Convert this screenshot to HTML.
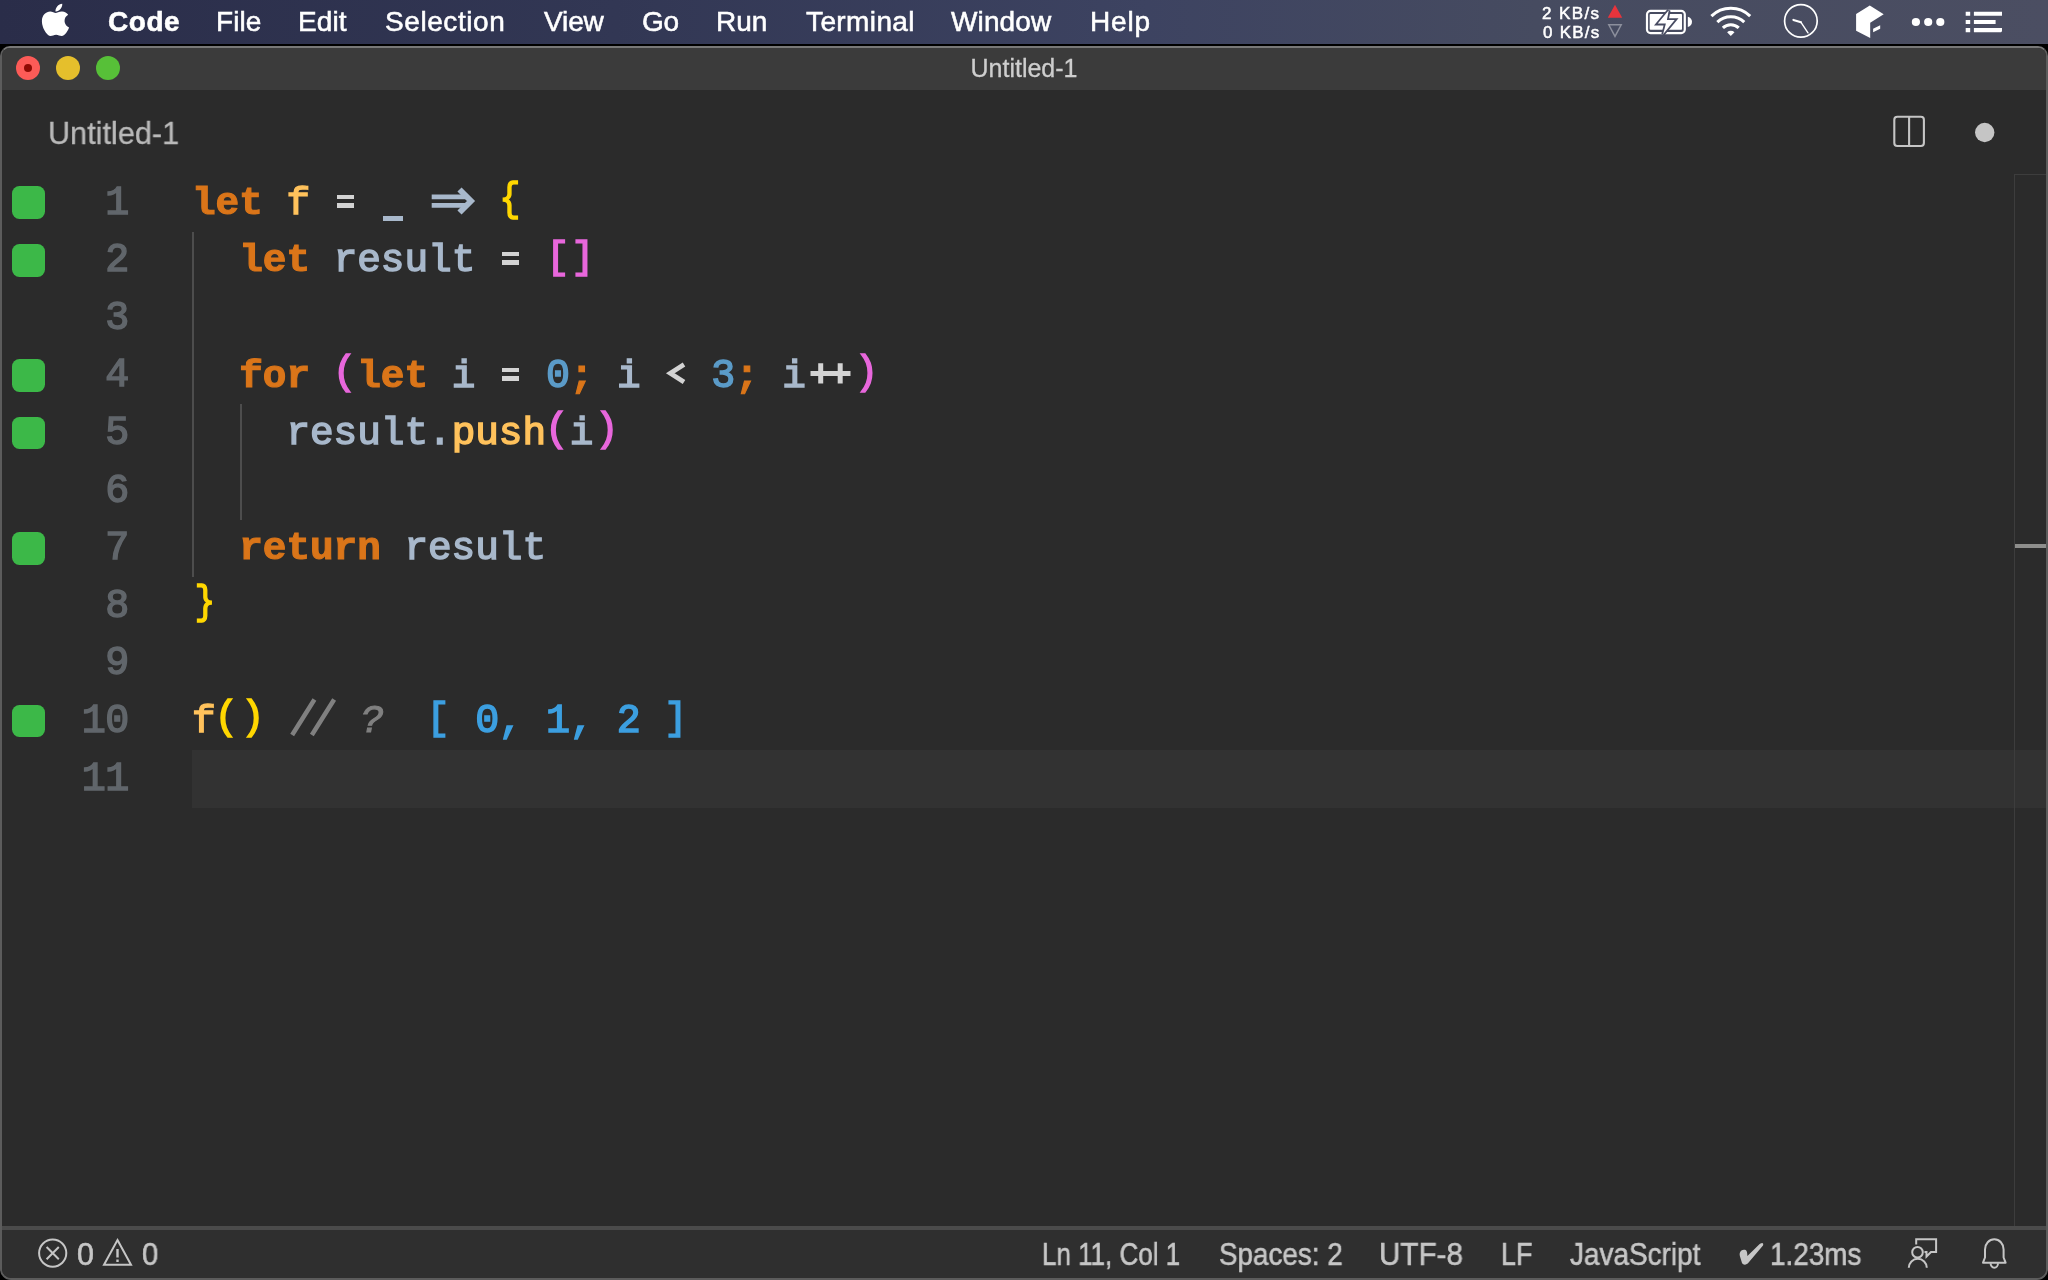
<!DOCTYPE html>
<html>
<head>
<meta charset="utf-8">
<title>Untitled-1</title>
<style>
*{margin:0;padding:0;box-sizing:border-box}
html,body{width:2048px;height:1280px;overflow:hidden;background:#000}
body{position:relative;font-family:"Liberation Sans",sans-serif;color:#fff}
.abs{position:absolute}
/* ---------- macOS menu bar ---------- */
#menubar{position:absolute;left:0;top:0;width:2048px;height:44px;
  background:linear-gradient(90deg,#2a2d49 0%,#323754 30%,#3d4361 56%,#464b60 75%,#4b4e62 100%)}
#menubar .mi{position:absolute;top:0;height:42px;line-height:43.6px;font-size:28px;color:#fff;white-space:nowrap;-webkit-text-stroke:.55px #fff}
#menubar .mi.b{font-weight:bold}
.net{position:absolute;font-size:17px;line-height:17px;color:#fff;white-space:nowrap;-webkit-text-stroke:.5px #fff}
/* ---------- window ---------- */
#win{position:absolute;left:0;top:46px;width:2048px;height:1234px;background:#2b2b2b;
  border:2px solid #5c5c5c;border-top-color:#787878;border-radius:10px 10px 11px 11px;overflow:hidden}
#titlebar{position:absolute;left:0;top:0;width:2044px;height:42px;background:#3b3b3b}
.tl{position:absolute;top:8px;width:24px;height:24px;border-radius:50%}
#title{position:absolute;left:0;width:2044px;top:0;height:42px;line-height:40px;text-align:center;font-size:25px;color:#cecece;-webkit-text-stroke:.3px #cecece}
#tab{position:absolute;left:46.2px;top:65px;font-size:32px;line-height:40px;color:#b9b9b9;-webkit-text-stroke:.3px #b9b9b9;white-space:nowrap;transform:scaleX(.957);transform-origin:0 50%}
/* ---------- editor ---------- */
#editor{position:absolute;left:-2px;top:126px;width:2048px;height:1054px}
.ln,.cl{position:absolute;height:57.6px;line-height:57.6px;font-family:"Liberation Mono",monospace;font-size:39.33px;white-space:pre}
.ln{left:0;width:129.5px;text-align:right;color:#61666b}
.cl{left:192px;color:#a8b8cb}
.sq{position:absolute;left:12.2px;width:32.7px;height:32.7px;border-radius:7.5px;background:#3cb848;margin-top:.1px}
.guide{position:absolute;width:2px;background:#4d4d4d}
.k{color:#da7519;font-weight:bold}
.f{color:#ffc25c}
.o{color:#d3d3d3}
.v{color:#a8b8cb}
.n{color:#5b9bc8}
.y{color:#ffd700}
.p{color:#e867dc}
.c{color:#808080;font-style:italic}
.r{color:#3c9fe0}

.cl,.ln{-webkit-text-stroke:1.5px currentColor}
.cl{margin-top:.8px}
.ln{font-size:40px;letter-spacing:-.404px;margin-top:.6px;padding-right:.6px}
.n,.r{font-size:40px;letter-spacing:-.404px;line-height:0}
.k{-webkit-text-stroke:1.1px currentColor}
.br,.sb{font-size:39.33px;letter-spacing:0;line-height:0}
.br{display:inline-block;transform:translateY(-3.16px) scaleY(1.016);transform-origin:50% 10.46px}
.sb{display:inline-block;transform:translateY(-3.2px) scaleY(0.99);transform-origin:50% 10.46px}
.g{display:inline-block;position:relative;width:23.6px;height:0;vertical-align:baseline}
.g2{width:47.2px}
.g i{position:absolute;display:block;background:currentColor}
.g svg{position:absolute;left:0;top:-40px;overflow:visible}
.mi,.net,#title,#tab,.cl,.ln,.st{will-change:transform}
/* ---------- status bar ---------- */
#sep{position:absolute;left:0;top:1178px;width:2044px;height:4px;background:#4b4b4b}
#status{position:absolute;left:0;top:1182px;width:2044px;height:48px;background:#2f2f2f}
#status .st{position:absolute;top:0;height:48px;line-height:48px;font-size:30.5px;transform-origin:0 50%;-webkit-text-stroke:.6px currentColor;color:#c6c6c6;white-space:nowrap}
</style>
</head>
<body>

<div id="menubar">
  <div class="mi b" style="left:107.5px;letter-spacing:0.53px">Code</div>
  <div class="mi" style="left:216.4px;letter-spacing:0.07px">File</div>
  <div class="mi" style="left:297.6px;letter-spacing:0.13px">Edit</div>
  <div class="mi" style="left:384.8px;letter-spacing:0.57px">Selection</div>
  <div class="mi" style="left:543.5px;letter-spacing:-0.13px">View</div>
  <div class="mi" style="left:642.2px;letter-spacing:-0.40px">Go</div>
  <div class="mi" style="left:716.4px;letter-spacing:-0.05px">Run</div>
  <div class="mi" style="left:805.9px;letter-spacing:0.39px">Terminal</div>
  <div class="mi" style="left:951.4px;letter-spacing:0.12px">Window</div>
  <div class="mi" style="left:1089.7px;letter-spacing:0.80px">Help</div>

  <svg class="abs" style="left:0;top:0" width="2048" height="42" viewBox="0 0 2048 42">
    <g transform="translate(41.61 1.49) scale(0.07210)" fill="#fff">
      <path d="M318.7 268.7c-.2-36.7 16.4-64.4 50-84.8-18.8-26.9-47.2-41.7-84.7-44.6-35.5-2.8-74.3 20.7-88.5 20.7-15 0-49.4-19.7-76.4-19.7C63.3 141.2 4 184.8 4 273.5q0 39.3 14.4 81.2c12.8 36.7 59 126.7 107.2 125.2 25.2-.6 43-17.9 75.8-17.9 31.8 0 48.3 17.9 76.4 17.9 48.6-.7 90.4-82.5 102.6-119.3-65.2-30.7-61.7-90-61.7-91.9zm-56.6-164.2c27.3-32.4 24.8-61.9 24-72.5-24.1 1.4-52 16.4-67.9 34.9-17.5 19.8-27.8 44.3-25.6 71.9 26.1 2 49.9-11.4 69.5-34.3z"/>
    </g>
    <!-- network arrows -->
    <path d="M1615 4.7L1622.2 17.8H1607.8Z" fill="#e8343c"/>
    <path d="M1608.8 24.8H1621.2L1615 36.4Z" fill="none" stroke="#8c8f9c" stroke-width="1.5"/>
    <!-- battery -->
    <rect x="1647" y="10.9" width="37.8" height="22.2" rx="3.6" fill="none" stroke="#fff" stroke-width="2.2"/>
    <rect x="1649.7" y="14" width="32.3" height="15.8" rx="0.8" fill="#fff"/>
    <path d="M1687.8 16.8C1693.4 18 1693.4 25.8 1687.8 27Z" fill="#fff"/>
    <path d="M1668.75 10.3L1657.8 23.6H1665.9L1663.1 34.2L1674.7 20.1H1666.9Z" fill="#fff" stroke="#474b61" stroke-width="3.6" stroke-linejoin="miter" paint-order="stroke"/>
    <!-- wifi -->
    <path d="M1711.42 16.03A27.90 27.90 0 0 1 1750.18 16.03M1717.32 22.14A19.40 19.40 0 0 1 1744.28 22.14M1722.88 27.90A11.40 11.40 0 0 1 1738.72 27.90" fill="none" stroke="#fff" stroke-width="3.1"/>
    <path d="M1730.80 36.10L1727.12 32.29A5.30 5.30 0 0 1 1734.48 32.29Z" fill="#fff"/>
    <!-- clock -->
    <circle cx="1800.9" cy="20.9" r="16.3" fill="none" stroke="#fff" stroke-width="1.7"/>
    <path d="M1793.4 19.9L1801 22.3" stroke="#fff" stroke-width="2.1" fill="none" stroke-linecap="round"/>
    <path d="M1801 22.3L1808 32.8" stroke="#fff" stroke-width="1.4" fill="none" stroke-linecap="round"/>
    <!-- cube -->
    <path d="M1869.8 5.6L1883.7 14.3L1870.2 22.8V38.1L1856.1 30.7V13.9Z" fill="#fff"/>
    <path d="M1873.1 28.8L1880.2 25.2V28.7L1873.1 32.3Z" fill="#fff"/>
    <!-- dots -->
    <circle cx="1915.9" cy="22" r="4.1" fill="#fff"/><circle cx="1928.2" cy="22" r="4.1" fill="#fff"/><circle cx="1940.3" cy="22" r="4.1" fill="#fff"/>
    <!-- list -->
    <path d="M1965.7 11.7h4.5v4.1h-4.5zM1973.9 11.7h28.1v4.1h-28.1zM1965.7 19.9h4.5v4.1h-4.5zM1973.9 19.9h21.7v4.1h-21.7zM1965.7 28h4.5v4.2h-4.5zM1973.9 28h28.1v3.2l-1 1h-27.1z" fill="#fff"/>
  </svg>
  <div class="net" style="left:1542px;top:5px;letter-spacing:1.4px">2 KB/s</div>
  <div class="net" style="left:1543px;top:24px;letter-spacing:1.25px">0 KB/s</div>
</div>

<div id="win">
  <div id="titlebar">
    <div class="tl" style="left:14px;background:#fc5b57"></div><div class="abs" style="left:22px;top:16px;width:8px;height:8px;border-radius:50%;background:#8e0b04"></div>
    <div class="tl" style="left:54px;background:#e5bf2c"></div>
    <div class="tl" style="left:94px;background:#57c038"></div>
    <div id="title">Untitled-1</div>
  </div>
  <div id="tab">Untitled-1</div>


  <svg class="abs" style="left:-2px;top:-48px;z-index:3;pointer-events:none" width="2048" height="1280" viewBox="0 0 2048 1280">
    <!-- split editor icon -->
    <rect x="1894.3" y="116.8" width="29.6" height="29.2" rx="3" fill="none" stroke="#c5c5c5" stroke-width="2.1"/>
    <path d="M1909.1 116.8V146" stroke="#c5c5c5" stroke-width="2.1" fill="none"/>
    <!-- dirty dot -->
    <circle cx="1984.7" cy="132.5" r="9.7" fill="#c5c5c5"/>
    <!-- overview ruler -->
    <path d="M2014.5 174V1226M2014 174.5H2046" stroke="#3d3d3d" stroke-width="1" fill="none"/>
    <rect x="2015" y="544" width="31" height="4" fill="#8e8e8c"/>
  </svg>

  <div id="editor">
    <div class="abs" style="left:192px;top:576.0px;width:1856px;height:57.6px;background:#323232"></div>
    <div class="guide" style="left:192px;top:57.6px;height:345.6px"></div>
    <div class="guide" style="left:240px;top:230.4px;height:115.2px"></div>
    <div class="sq" style="top:12.3px"></div>
    <div class="ln" style="top:0.0px">1</div>
    <div class="cl" style="top:0.0px"><span class="k">let</span> <span class="f">f</span> <span class="g o"><i style="left:3.3px;width:17.3px;top:-19.4px;height:4.8px"></i><i style="left:3.3px;width:17.3px;top:-11.3px;height:4.8px"></i></span> <span class="g v"><i style="left:1.8px;width:20.4px;top:2.3px;height:4.9px"></i></span> <span class="g g2 v"><svg width="48" height="50" viewBox="0 -40 48 50"><path d="M3.7 -17.2H38M3.7 -8.7H38" stroke="currentColor" stroke-width="4.8" fill="none"/><path d="M31.5 -24.45L43 -12.95L31.5 -1.45" stroke="currentColor" stroke-width="5.8" fill="none" stroke-linejoin="miter"/></svg></span> <span class="y br" style="transform:translate(-.9px,-3.16px) scale(.88,1.016)">{</span></div>
    <div class="sq" style="top:69.9px"></div>
    <div class="ln" style="top:57.6px">2</div>
    <div class="cl" style="top:57.6px">  <span class="k">let</span> <span class="v">result</span> <span class="g o"><i style="left:3.3px;width:17.3px;top:-19.4px;height:4.8px"></i><i style="left:3.3px;width:17.3px;top:-11.3px;height:4.8px"></i></span> <span class="p sb">[</span><span class="p sb" style="transform:translate(1.4px,-3.2px) scaleY(.99)">]</span></div>
    <div class="ln" style="top:115.2px">3</div>
    <div class="sq" style="top:185.1px"></div>
    <div class="ln" style="top:172.8px">4</div>
    <div class="cl" style="top:172.8px">  <span class="k">for</span> <span class="p br" style="transform:translate(-1px,-3.16px) scaleY(1.016)">(</span><span class="k">let</span> <span class="v">i</span> <span class="g o"><i style="left:3.3px;width:17.3px;top:-19.4px;height:4.8px"></i><i style="left:3.3px;width:17.3px;top:-11.3px;height:4.8px"></i></span> <span class="n">0</span><span class="k">;</span> <span class="v">i</span> <span class="g o"><svg width="24" height="50" viewBox="0 -40 24 50"><path d="M20 -22.6L6.3 -13.8L20 -5" stroke="currentColor" stroke-width="4.7" fill="none" stroke-linejoin="miter"/></svg></span> <span class="n">3</span><span class="k">;</span> <span class="v">i</span><span class="g g2 o"><svg width="48" height="50" viewBox="0 -40 48 50"><path d="M4.5 -13.6H44.5M14.7 -23.7V-3.4M34.2 -23.7V-3.4" stroke="currentColor" stroke-width="5" fill="none"/></svg></span><span class="p br" style="transform:translate(1.7px,-3.16px) scaleY(1.016)">)</span></div>
    <div class="sq" style="top:242.7px"></div>
    <div class="ln" style="top:230.4px">5</div>
    <div class="cl" style="top:230.4px">    <span class="v">result.</span><span class="f">push</span><span class="p br" style="transform:translate(-1px,-3.16px) scaleY(1.016)">(</span><span class="v">i</span><span class="p br" style="transform:translate(1.7px,-3.16px) scaleY(1.016)">)</span></div>
    <div class="ln" style="top:288.0px">6</div>
    <div class="sq" style="top:357.9px"></div>
    <div class="ln" style="top:345.6px">7</div>
    <div class="cl" style="top:345.6px">  <span class="k">return</span> <span class="v">result</span></div>
    <div class="ln" style="top:403.2px">8</div>
    <div class="cl" style="top:403.2px"><span class="y br" style="transform:translate(1.2px,-3.16px) scale(.86,1.016)">}</span></div>
    <div class="ln" style="top:460.8px">9</div>
    <div class="sq" style="top:530.7px"></div>
    <div class="ln" style="top:518.4px">10</div>
    <div class="cl" style="top:518.4px"><span class="f">f</span><span class="y br" style="transform:translate(-1px,-3.16px) scaleY(1.016)">(</span><span class="y br" style="transform:translate(1.7px,-3.16px) scaleY(1.016)">)</span> <span class="g g2 c"><svg width="48" height="50" viewBox="0 -40 48 50"><path d="M6.15 3L28.45 -32.5M25.85 3L48.15 -32.5" stroke="currentColor" stroke-width="4.5" fill="none"/></svg></span> <span class="c" style="position:relative;left:3px;-webkit-text-stroke:1.1px currentColor">?</span>  <span class="r sb" style="margin-left:-1.8px;margin-right:1.8px">[</span><span class="r"> 0, 1, 2 </span><span class="r sb">]</span></div>
    <div class="ln" style="top:576.0px">11</div>
  </div>

  <div id="sep"></div>
  <div id="status">
    <svg class="abs" style="left:-2px;top:-1230px" width="2048" height="1280" viewBox="0 0 2048 1280" fill="none" stroke="#c6c6c6" stroke-width="2">
      <!-- error -->
      <circle cx="52.7" cy="1253.1" r="13.6"/>
      <path d="M46.6 1247L58.8 1259.2M58.8 1247L46.6 1259.2"/>
      <!-- warning -->
      <path d="M117.5 1240L131 1264.8H104Z" stroke-linejoin="miter"/>
      <path d="M117.5 1249V1257.5M117.5 1259.5V1262" stroke-width="2.4"/>
      <!-- feedback -->
      <path d="M1916.2 1244.5V1239.3H1936.1V1252H1931L1926.5 1256.5V1252H1924.5"/>
      <circle cx="1917.5" cy="1252.2" r="5.3"/>
      <path d="M1908.8 1267.8A9 9 0 0 1 1926.8 1267.8"/>
      <!-- check mark -->
      <path d="M1761.5 1243.2C1763 1242.8 1763.7 1244 1763 1245.6L1748.6 1262.6C1746.6 1265.1 1743.4 1265.4 1742 1263L1740 1256.6C1738.9 1252.6 1740.8 1250 1743.8 1249.8C1746.5 1249.6 1747.3 1251.5 1747.4 1256L1759.4 1244.2C1760.2 1243.5 1760.8 1243.3 1761.5 1243.2Z" fill="#c6c6c6" stroke="none"/>
      <!-- bell -->
      <path d="M1983 1262.7H2005.6L2003.6 1257.5V1249.5A9.3 10.2 0 0 0 1985 1249.5V1257.5Z" stroke-linejoin="round"/>
      <path d="M1990.6 1263.2A3.7 4.6 0 0 0 1998 1263.2"/>
    </svg>
    <div class="st" style="left:75.2px;transform:scaleX(.98)">0</div>
    <div class="st" style="left:140.2px;transform:scaleX(.96)">0</div>
    <div class="st" id="s1" style="left:1040px;transform:scaleX(.852)">Ln 11, Col 1</div>
    <div class="st" id="s2" style="left:1216.5px;transform:scaleX(.912)">Spaces: 2</div>
    <div class="st" id="s3" style="left:1377.1px;transform:scaleX(.971)">UTF-8</div>
    <div class="st" id="s4" style="left:1498.7px;transform:scaleX(.882)">LF</div>
    <div class="st" id="s5" style="left:1568.3px;transform:scaleX(.915)">JavaScript</div>
    <div class="st" id="s7" style="left:1767.5px;transform:scaleX(.914)">1.23ms</div>
  </div>
</div>

</body>
</html>
